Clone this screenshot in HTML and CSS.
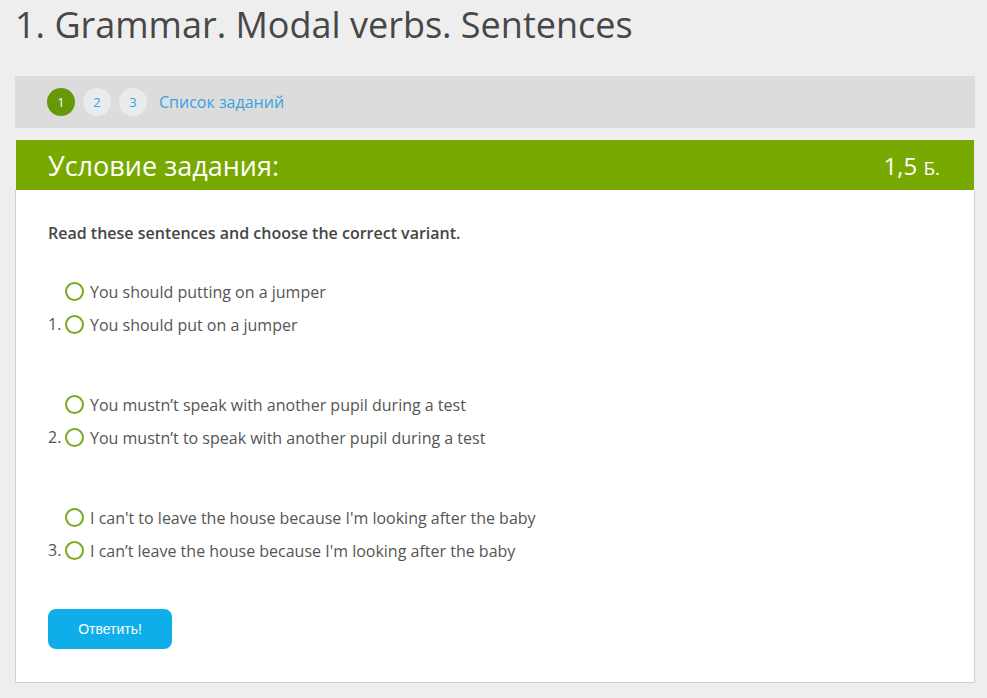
FILE: index.html
```html
<!DOCTYPE html>
<html lang="ru">

<head>
    <meta charset="UTF-8">
    <meta name="viewport" content="width=device-width, initial-scale=1.0">
    <title>1. Grammar. Modal verbs. Sentences</title>
    <link rel="stylesheet" href="styles.css">
</head>

<body>
    <div class="page">
        <h1 class="title">1. Grammar. Modal verbs. Sentences</h1>

        <div class="tasks-nav">
            <span class="task-num active">1</span>
            <a class="task-num" href="#">2</a>
            <a class="task-num" href="#">3</a>
            <a class="task-list" href="#">Список заданий</a>
        </div>

        <div class="task-head">
            <span class="task-head-title">Условие задания:</span>
            <span class="task-points">1,5 <small>Б.</small></span>
        </div>

        <div class="task-body">
            <p class="task-text">Read these sentences and choose the correct variant.</p>

            <div class="question">
                <div class="q-num">1.</div>
                <div class="q-options">
                    <label class="option"><span class="radio"></span>You should putting on a jumper</label>
                    <label class="option"><span class="radio"></span>You should put on a jumper</label>
                </div>
            </div>

            <div class="question">
                <div class="q-num">2.</div>
                <div class="q-options">
                    <label class="option"><span class="radio"></span>You mustn’t speak with another pupil during a test</label>
                    <label class="option"><span class="radio"></span>You mustn’t to speak with another pupil during a test</label>
                </div>
            </div>

            <div class="question">
                <div class="q-num">3.</div>
                <div class="q-options">
                    <label class="option"><span class="radio"></span>I can't to leave the house because I'm looking after the baby</label>
                    <label class="option"><span class="radio"></span>I can’t leave the house because I'm looking after the baby</label>
                </div>
            </div>

            <button class="answer-btn">Ответить!</button>
        </div>
    </div>
</body>

</html>
```

FILE: styles.css
```css
body {
    margin: 0;
    background: #eeeeee;
    font-family: "Open Sans", "Noto Sans", sans-serif;
    color: #444;
}

.page {
    width: 960px;
    margin-left: 15px;
    padding-bottom: 16px;
}

.title {
    margin: 0 0 27px;
    font-size: 36px;
    font-weight: 400;
    line-height: 49px;
    color: #474747;
}

.tasks-nav {
    display: flex;
    align-items: center;
    height: 52px;
    padding-left: 32px;
    background: #dcdcdc;
}

.task-num {
    display: flex;
    align-items: center;
    justify-content: center;
    width: 28px;
    height: 28px;
    margin-right: 8px;
    border-radius: 50%;
    background: #e9ecee;
    color: #3a9fdc;
    font-size: 13px;
    text-decoration: none;
}

.task-num.active {
    background: #66990a;
    color: #fff;
}

.task-list {
    margin-left: 4px;
    color: #3aa2e0;
    font-size: 16px;
    text-decoration: none;
}

.task-head {
    display: flex;
    justify-content: space-between;
    align-items: center;
    height: 50px;
    margin: 12px 1px 0;
    padding: 0 34px 0 32px;
    background: #78a900;
    color: #fff;
}

.task-head-title {
    font-size: 27px;
}

.task-points {
    font-size: 24px;
}

.task-points small {
    font-size: 19px;
}

.task-body {
    background: #fff;
    border: 1px solid #d0d0d0;
    border-top: none;
    padding: 32px 32px 33px;
}

.task-text {
    margin: 0 0 31px;
    font-size: 16px;
    font-weight: 600;
    line-height: 22px;
    color: #454545;
}

.question {
    display: flex;
    align-items: flex-end;
    margin-bottom: 47px;
    color: #555;
    font-size: 16px;
}

.q-num {
    width: 17px;
    line-height: 33px;
}

.option {
    display: flex;
    align-items: center;
    height: 33px;
    cursor: pointer;
}

.radio {
    width: 15px;
    height: 15px;
    margin-right: 6px;
    border: 2px solid #79aa1c;
    border-radius: 50%;
}

.answer-btn {
    display: block;
    width: 124px;
    height: 40px;
    margin-top: -5px;
    border: none;
    border-radius: 8px;
    background: #0eaeea;
    color: #fff;
    font-family: "Liberation Sans", Arial, sans-serif;
    font-size: 14px;
    cursor: pointer;
}
```
